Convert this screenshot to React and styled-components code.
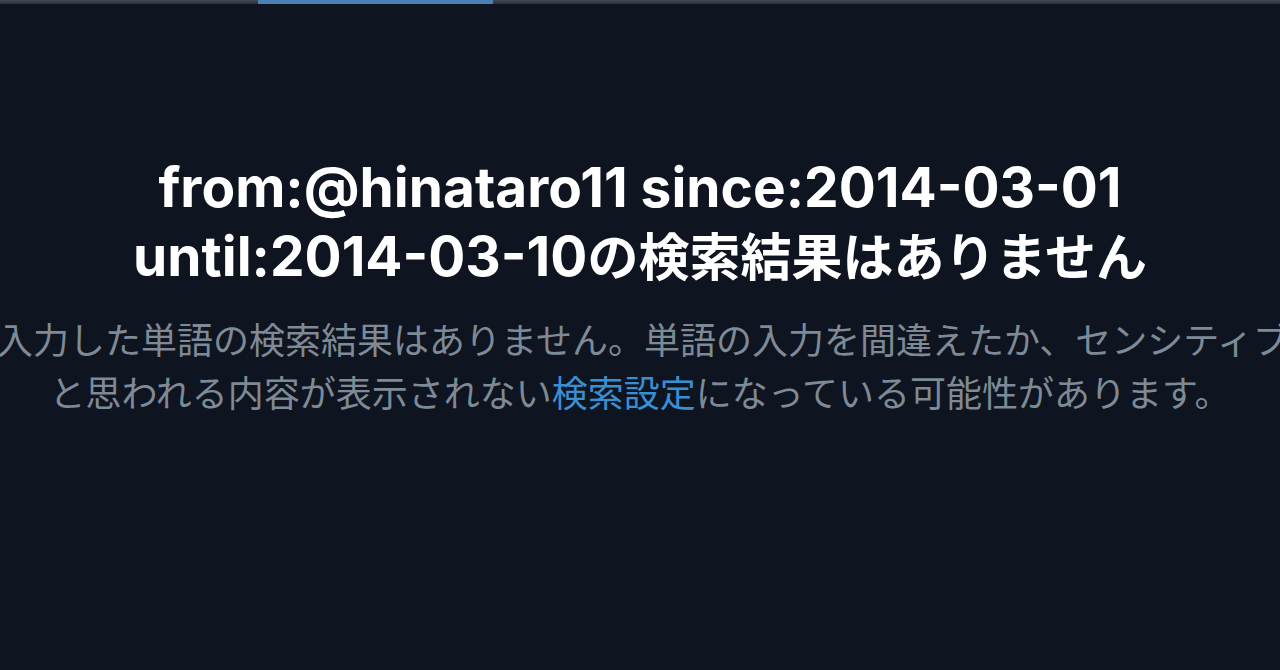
import React from 'react'
import styled, { createGlobalStyle } from 'styled-components'

const GlobalStyle = createGlobalStyle`
  html, body {
    margin: 0;
    padding: 0;
    background: #0f1520;
  }
  body {
    font-family: Inter, "Liberation Sans", "Noto Sans CJK JP", sans-serif;
  }
`

const App = () => {
  return (
    <Page>
      <GlobalStyle />
      <TabStrip>
        <TabSpacer w="258px" />
        <ActiveTab />
        <TabSpacer w="auto" />
      </TabStrip>
      <Content>
        <Title>
          <TitleLine>from:@hinataro11 since:2014-03-01</TitleLine>
          <TitleLine>
            until:2014-03-10<Jp>の検索結果はありません</Jp>
          </TitleLine>
        </Title>
        <Message>
          <MessageLine shift="6px">入力した単語の検索結果はありません。単語の入力を間違えたか、センシティブ</MessageLine>
          <MessageLine>
            と思われる内容が表示されない<Link>検索設定</Link>になっている可能性があります。
          </MessageLine>
        </Message>
      </Content>
    </Page>
  )
}

export default App

const Page = styled.div`
width: 1280px;
height: 670px;
overflow: hidden;
background: #0f1520;
display: flex;
flex-direction: column;
`
const TabStrip = styled.div`
height: 4px;
display: flex;
background: linear-gradient(#454b54, #2b3038);
flex-shrink: 0;
`
const TabSpacer = styled.div`
width: ${({w})=>w};
flex: ${({w})=>w === 'auto' ? 1 : 'none'};
`
const ActiveTab = styled.div`
width: 235px;
background: #4b7fb6;
`
const Content = styled.div`
display: flex;
flex-direction: column;
align-items: center;
padding-top: 150px;
`
const Title = styled.div`
display: flex;
flex-direction: column;
align-items: center;
color: #ffffff;
font-weight: 700;
font-size: 55px;
line-height: 67px;
`
const TitleLine = styled.div`
white-space: nowrap;
`
const Jp = styled.span`
font-family: "Noto Sans CJK JP", sans-serif;
font-size: 51px;
`
const Message = styled.div`
margin-top: 22px;
width: 1280px;
display: flex;
flex-direction: column;
align-items: center;
color: #7e8a96;
font-family: "Noto Sans CJK JP", sans-serif;
font-size: 36px;
line-height: 53px;
`
const MessageLine = styled.div`
white-space: nowrap;
padding-left: ${({shift})=>shift || 0};
`
const Link = styled.span`
color: #3a8fd3;
`
